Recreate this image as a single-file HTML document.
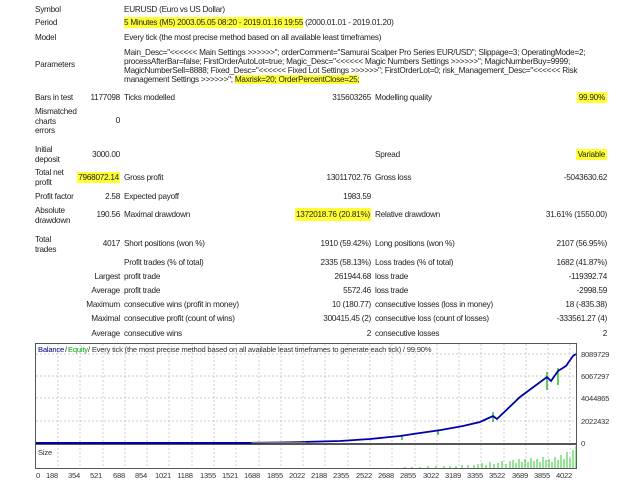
<!DOCTYPE html>
<html><head><meta charset="utf-8"><style>
body{margin:0;width:640px;height:480px;background:#fff;overflow:hidden;font-family:"Liberation Sans",sans-serif;font-size:8.2px;letter-spacing:-0.25px;color:#222;position:relative}
.t{position:absolute;white-space:nowrap;line-height:10px}
.r{position:absolute;white-space:nowrap;line-height:10px;text-align:right}
.h{background:#ffff33}
</style></head><body>
<div class="t" style="left:35px;top:5px">Symbol</div>
<div class="t" style="left:124px;top:5px">EURUSD (Euro vs US Dollar)</div>
<div class="t" style="left:35px;top:18px">Period</div>
<div class="t" style="left:124px;top:18px"><span class="h" style="padding:1px 0">5 Minutes (M5) 2003.05.05 08:20 - 2019.01.16 19:55</span> (2000.01.01 - 2019.01.20)</div>
<div class="t" style="left:35px;top:33px">Model</div>
<div class="t" style="left:124px;top:33px">Every tick (the most precise method based on all available least timeframes)</div>
<div class="t" style="left:35px;top:60px">Parameters</div>
<div class="t" style="left:124px;top:48px;line-height:9px">Main_Desc="&lt;&lt;&lt;&lt;&lt;&lt; Main Settings &gt;&gt;&gt;&gt;&gt;&gt;"; orderComment="Samurai Scalper Pro Series EUR/USD"; Slippage=3; OperatingMode=2;<br>processAfterBar=false; FirstOrderAutoLot=true; Magic_Desc="&lt;&lt;&lt;&lt;&lt;&lt; Magic Numbers Settings &gt;&gt;&gt;&gt;&gt;&gt;"; MagicNumberBuy=9999;<br>MagicNumberSell=8888; Fixed_Desc="&lt;&lt;&lt;&lt;&lt;&lt; Fixed Lot Settings &gt;&gt;&gt;&gt;&gt;&gt;"; FirstOrderLot=0; risk_Management_Desc="&lt;&lt;&lt;&lt;&lt;&lt; Risk<br>management Settings &gt;&gt;&gt;&gt;&gt;&gt;"; <span class="h">Maxrisk=20; OrderPercentClose=25;</span></div>
<div class="t" style="left:35px;top:93px">Bars in test</div>
<div class="r" style="right:520px;top:93px">1177098</div>
<div class="t" style="left:124px;top:93px">Ticks modelled</div>
<div class="r" style="right:269px;top:93px">315603265</div>
<div class="t" style="left:375px;top:93px">Modelling quality</div>
<div class="r" style="right:33px;top:93px"><span class="h" style="padding:1px 2px">99.90%</span></div>
<div class="t" style="left:35px;top:107px;line-height:9.5px">Mismatched<br>charts<br>errors</div>
<div class="r" style="right:520px;top:116px">0</div>

<div class="t" style="left:35px;top:145px;line-height:9.5px">Initial<br>deposit</div>
<div class="r" style="right:520px;top:150px">3000.00</div>
<div class="t" style="left:375px;top:150px">Spread</div>
<div class="r" style="right:33px;top:150px"><span class="h" style="padding:1px 2px">Variable</span></div>
<div class="t" style="left:35px;top:168px;line-height:9.5px">Total net<br>profit</div>
<div class="r" style="right:520px;top:173px"><span class="h" style="padding:1px 1px">7968072.14</span></div>
<div class="t" style="left:124px;top:173px">Gross profit</div>
<div class="r" style="right:269px;top:173px">13011702.76</div>
<div class="t" style="left:375px;top:173px">Gross loss</div>
<div class="r" style="right:33px;top:173px">-5043630.62</div>
<div class="t" style="left:35px;top:192px">Profit factor</div>
<div class="r" style="right:520px;top:192px">2.58</div>
<div class="t" style="left:124px;top:192px">Expected payoff</div>
<div class="r" style="right:269px;top:192px">1983.59</div>
<div class="t" style="left:35px;top:206px;line-height:9.5px">Absolute<br>drawdown</div>
<div class="r" style="right:520px;top:210px">190.56</div>
<div class="t" style="left:124px;top:210px">Maximal drawdown</div>
<div class="r" style="right:269px;top:210px"><span class="h" style="padding:2px 1px">1372018.76 (20.81%)</span></div>
<div class="t" style="left:375px;top:210px">Relative drawdown</div>
<div class="r" style="right:33px;top:210px">31.61% (1550.00)</div>
<div class="t" style="left:35px;top:235px;line-height:9.5px">Total<br>trades</div>
<div class="r" style="right:520px;top:239px">4017</div>
<div class="t" style="left:124px;top:239px">Short positions (won %)</div>
<div class="r" style="right:269px;top:239px">1910 (59.42%)</div>
<div class="t" style="left:375px;top:239px">Long positions (won %)</div>
<div class="r" style="right:33px;top:239px">2107 (56.95%)</div>
<div class="t" style="left:124px;top:258px">Profit trades (% of total)</div>
<div class="r" style="right:269px;top:258px">2335 (58.13%)</div>
<div class="t" style="left:375px;top:258px">Loss trades (% of total)</div>
<div class="r" style="right:33px;top:258px">1682 (41.87%)</div>
<div class="r" style="right:520px;top:272px">Largest</div>
<div class="t" style="left:124px;top:272px">profit trade</div>
<div class="r" style="right:269px;top:272px">261944.68</div>
<div class="t" style="left:375px;top:272px">loss trade</div>
<div class="r" style="right:33px;top:272px">-119392.74</div>
<div class="r" style="right:520px;top:286px">Average</div>
<div class="t" style="left:124px;top:286px">profit trade</div>
<div class="r" style="right:269px;top:286px">5572.46</div>
<div class="t" style="left:375px;top:286px">loss trade</div>
<div class="r" style="right:33px;top:286px">-2998.59</div>
<div class="r" style="right:520px;top:300px">Maximum</div>
<div class="t" style="left:124px;top:300px">consecutive wins (profit in money)</div>
<div class="r" style="right:269px;top:300px">10 (180.77)</div>
<div class="t" style="left:375px;top:300px">consecutive losses (loss in money)</div>
<div class="r" style="right:33px;top:300px">18 (-835.38)</div>
<div class="r" style="right:520px;top:314px">Maximal</div>
<div class="t" style="left:124px;top:314px">consecutive profit (count of wins)</div>
<div class="r" style="right:269px;top:314px">300415.45 (2)</div>
<div class="t" style="left:375px;top:314px">consecutive loss (count of losses)</div>
<div class="r" style="right:33px;top:314px">-333561.27 (4)</div>
<div class="r" style="right:520px;top:329px">Average</div>
<div class="t" style="left:124px;top:329px">consecutive wins</div>
<div class="r" style="right:269px;top:329px">2</div>
<div class="t" style="left:375px;top:329px">consecutive losses</div>
<div class="r" style="right:33px;top:329px">2</div>

<svg style="position:absolute;left:0;top:0" width="640" height="480" font-family="Liberation Sans, sans-serif" font-size="7.6" letter-spacing="-0.2">
<g stroke="#bbb" stroke-dasharray="2,2" stroke-width="0.7">
<line x1="36" y1="354" x2="576" y2="354"/><line x1="36" y1="376" x2="576" y2="376"/><line x1="36" y1="398" x2="576" y2="398"/><line x1="36" y1="421" x2="576" y2="421"/>
<line x1="58" y1="344" x2="58" y2="468"/><line x1="80" y1="344" x2="80" y2="468"/><line x1="103" y1="344" x2="103" y2="468"/><line x1="125" y1="344" x2="125" y2="468"/><line x1="147" y1="344" x2="147" y2="468"/><line x1="169" y1="344" x2="169" y2="468"/><line x1="192" y1="344" x2="192" y2="468"/><line x1="214" y1="344" x2="214" y2="468"/><line x1="236" y1="344" x2="236" y2="468"/><line x1="259" y1="344" x2="259" y2="468"/><line x1="281" y1="344" x2="281" y2="468"/><line x1="303" y1="344" x2="303" y2="468"/><line x1="325" y1="344" x2="325" y2="468"/><line x1="348" y1="344" x2="348" y2="468"/><line x1="370" y1="344" x2="370" y2="468"/><line x1="392" y1="344" x2="392" y2="468"/><line x1="415" y1="344" x2="415" y2="468"/><line x1="437" y1="344" x2="437" y2="468"/><line x1="459" y1="344" x2="459" y2="468"/><line x1="481" y1="344" x2="481" y2="468"/><line x1="504" y1="344" x2="504" y2="468"/><line x1="526" y1="344" x2="526" y2="468"/><line x1="548" y1="344" x2="548" y2="468"/><line x1="570" y1="344" x2="570" y2="468"/>
</g>
<rect x="35.5" y="343.5" width="541" height="100" fill="none" stroke="#555"/>
<rect x="35.5" y="444.5" width="541" height="24" fill="none" stroke="#555"/>
<g stroke="#0a0" stroke-width="1.2">
<line x1="493" y1="412" x2="493" y2="422"/><line x1="547" y1="372" x2="547" y2="390"/><line x1="558" y1="368" x2="558" y2="385"/><line x1="402" y1="435" x2="402" y2="440"/><line x1="438" y1="430" x2="438" y2="435"/>
</g>
<g stroke="#0b0" stroke-width="0.8">
<path d="M405 468V467M412 468V467M420 468V467M428 468V466M436 468V466M444 468V466M450 468V466M456 468V466M462 468V465M468 468V465M474 468V465M478 468V464M482 468V463M486 468V465M490 468V462M494 468V464M498 468V463M502 468V461M506 468V464M510 468V461M513 468V460M516 468V463M519 468V459M522 468V462M525 468V459M528 468V462M531 468V458M534 468V461M537 468V459M540 468V462M543 468V457M546 468V460M549 468V459M552 468V462M555 468V457M558 468V460M561 468V455M564 468V459M567 468V452M570 468V458M573 468V450M576 468V446"/>
</g>
<path d="M36 443H250L300 442L340 441L370 439L400 436L420 433L441 430L463 426L480 422L493 416L497 419L520 397L547 377L551 381L558 371L566 366L573 356L576 354" fill="none" stroke="#0000aa" stroke-width="1.8"/>
<line x1="36" y1="443" x2="250" y2="443" stroke="#0000aa" stroke-width="2"/>
<line x1="252" y1="442.5" x2="306" y2="442.5" stroke="#777" stroke-width="1.6"/>
<text x="38" y="352" fill="#000080">Balance</text><text x="65" y="352" fill="#333">/</text><text x="68" y="352" fill="#0a0">Equity</text>
<text x="88" y="352" fill="#333">/ Every tick (the most precise method based on all available least timeframes to generate each tick) / 99.90%</text>
<text x="38" y="455" fill="#333">Size</text>
<g fill="#333"><text x="581" y="357">8089729</text><text x="581" y="379">6067297</text><text x="581" y="401">4044865</text><text x="581" y="424">2022432</text><text x="581" y="446">0</text></g>
<g fill="#333" text-anchor="middle"><text x="38" y="478">0</text><text x="52" y="478">188</text><text x="74" y="478">354</text><text x="96" y="478">521</text><text x="119" y="478">688</text><text x="141" y="478">854</text><text x="163" y="478">1021</text><text x="185" y="478">1188</text><text x="208" y="478">1355</text><text x="230" y="478">1521</text><text x="252" y="478">1688</text><text x="275" y="478">1855</text><text x="297" y="478">2022</text><text x="319" y="478">2188</text><text x="341" y="478">2355</text><text x="364" y="478">2522</text><text x="386" y="478">2688</text><text x="408" y="478">2855</text><text x="431" y="478">3022</text><text x="453" y="478">3189</text><text x="475" y="478">3355</text><text x="497" y="478">3522</text><text x="520" y="478">3689</text><text x="542" y="478">3855</text><text x="564" y="478">4022</text></g>
</svg>
</body></html>
